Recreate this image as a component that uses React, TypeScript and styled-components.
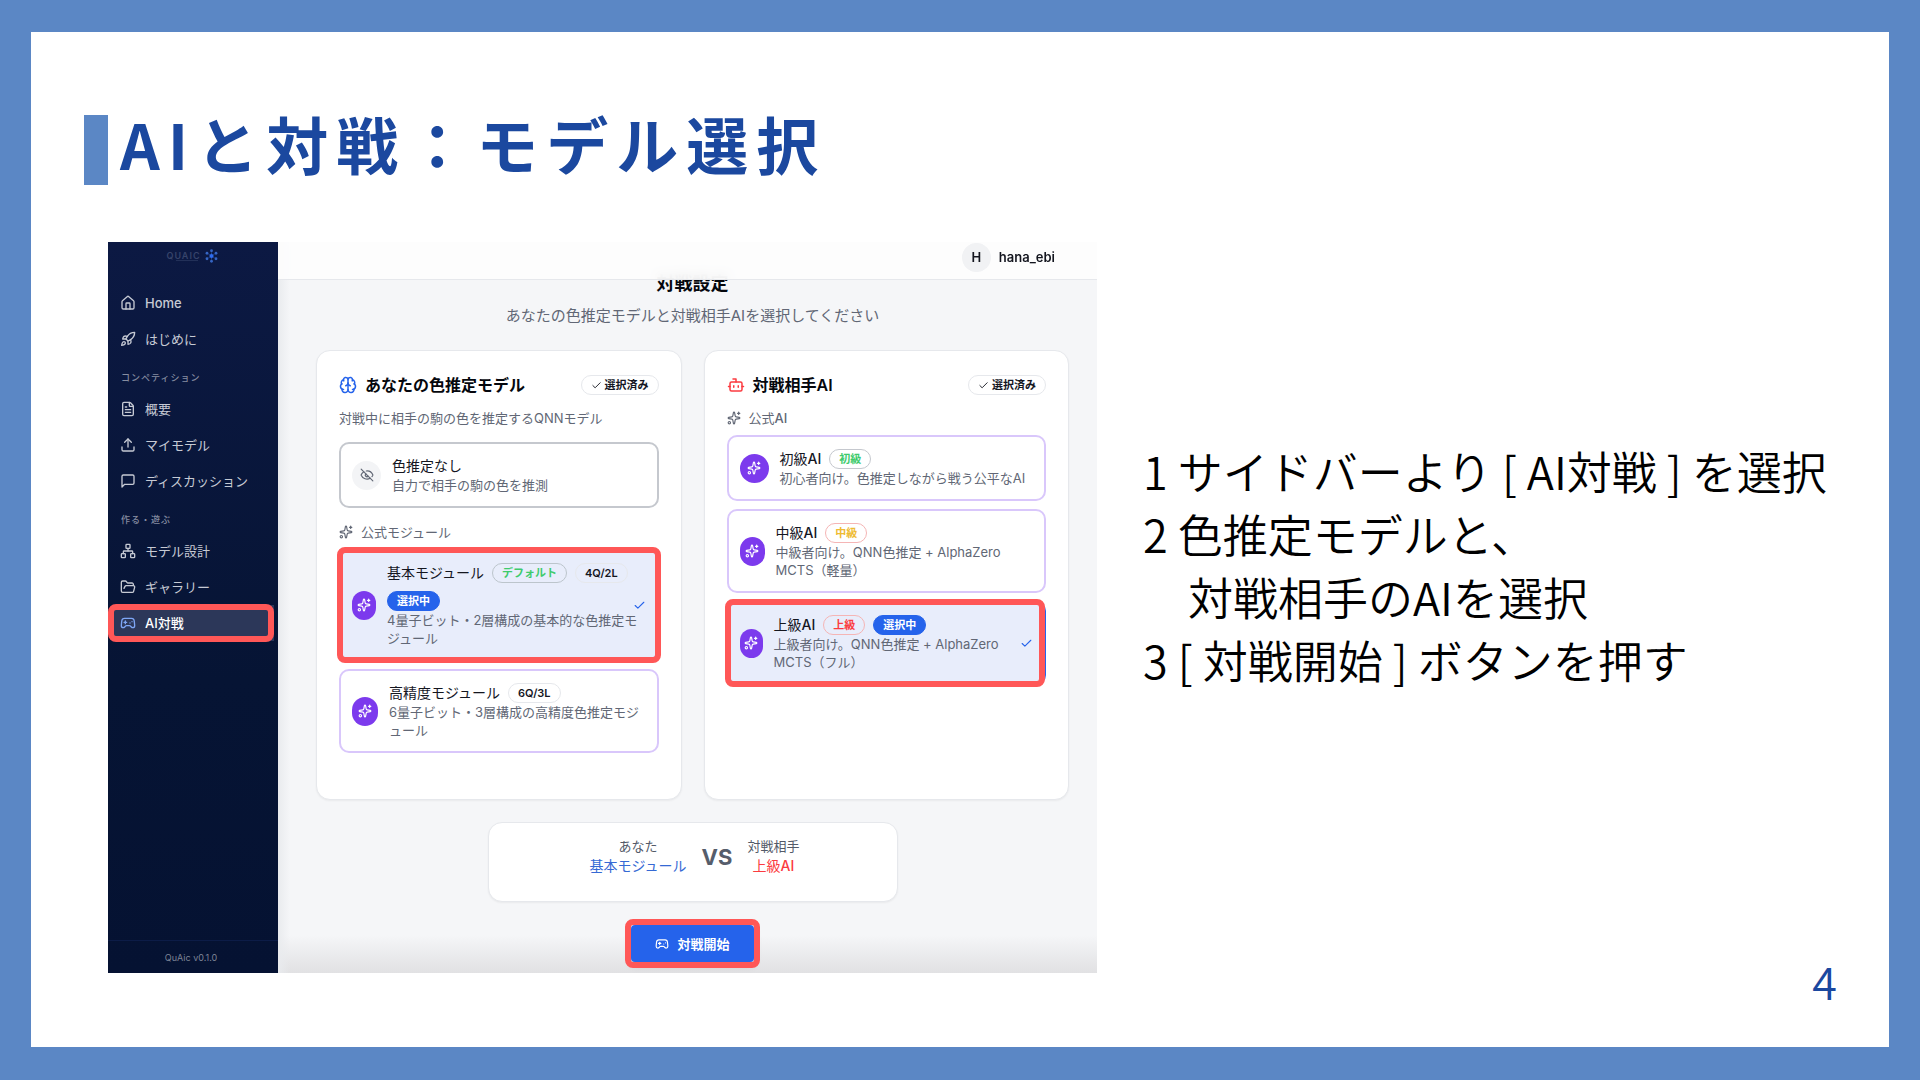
import React from "react";
import styled, { createGlobalStyle } from "styled-components";
import {
  Bot,
  Brain,
  Check,
  EyeOff,
  FileText,
  FolderOpen,
  Gamepad2,
  House,
  Network,
  Rocket,
  Sparkles,
  Upload,
} from "lucide-react";

const color = {
  frame: "#5b87c5",
  heading: "#1b489f",
  mark: "#ff5757",
  blue: "#2563eb",
  purple: "#7c3aed",
  red: "#fb3b40",
  green: "#3ecb6c",
  amber: "#eebb33",
  ink: "#14161f",
  muted: "#616775",
  line: "#e6e8ec",
};

const GlobalStyle = createGlobalStyle`
  * { box-sizing: border-box; }
  body { margin: 0; background: ${color.frame}; }
  button { font: inherit; color: inherit; }
  h1, h2, h3, p, ul, ol { margin: 0; padding: 0; }
  ul, ol { list-style: none; }
`;

const Slide = styled.main`
  min-height: 100vh;
  display: flex;
  flex-direction: column;
  padding: 83px 0 44px;
  border: solid ${color.frame};
  border-width: 32px 31px 33px;
  background: #fff;
  font-family: "Noto Sans CJK JP", sans-serif;
`;

const SlideTitle = styled.h1`
  display: flex;
  align-items: flex-start;
  gap: 12px;
  margin: 0 53px 57px;
  height: 70px;
  color: ${color.heading};
  font-size: 62px;
  font-weight: 700;
  line-height: 56px;
  letter-spacing: 8px;
  white-space: nowrap;

  &::before {
    content: "";
    width: 24px;
    height: 70px;
    background: ${color.frame};
  }
`;

const Columns = styled.div`
  flex: 1;
  display: grid;
  grid-template-columns: minmax(0, 989fr) minmax(0, 698fr);
  gap: 46px;
  padding: 0 48px 0 77px;
`;

const Notes = styled.section`
  display: flex;
  flex-direction: column;
  justify-content: space-between;
  padding-top: 197px;
`;

const Steps = styled.ol`
  color: #000;
  font-size: 45px;
  font-weight: 350;
  line-height: 63px;
  white-space: pre;
`;

const PageNumber = styled.p`
  padding-right: 4px;
  color: ${color.heading};
  font-size: 45px;
  font-weight: 350;
  line-height: 44px;
  text-align: right;
`;

const AppWindow = styled.section`
  display: grid;
  grid-template-columns: 170px minmax(0, 1fr);
  align-self: start;
  overflow: hidden;
  font-family: Inter, "Noto Sans CJK JP", sans-serif;
`;

const Sidebar = styled.aside`
  display: flex;
  flex-direction: column;
  background: linear-gradient(#0c1943, #061434 60%, #051232);
  color: #c6cad4;
`;

const Logo = styled.div`
  display: flex;
  justify-content: center;
  align-items: center;
  gap: 4px;
  height: 27px;
  margin-bottom: 16px;
  padding-right: 2px;
  color: #36436a;
  font-size: 9px;
  font-weight: 600;
  letter-spacing: 1px;
`;

const LogoName = styled.span`
  line-height: 11px;
  background: linear-gradient(#223058, #223058) 10px 100% / 22px 1px no-repeat;
`;

const Nav = styled.nav`
  flex: 1;
  padding: 0 4px 0 6px;
`;

const NavLabel = styled.h2`
  padding: 15px 7px 7px;
  color: #868da1;
  font-size: 9px;
  font-weight: 500;
  line-height: 12px;
  letter-spacing: 1px;
`;

const NavLink = styled.a<{ $active?: boolean }>`
  position: relative;
  display: flex;
  align-items: center;
  gap: 9px;
  height: 36px;
  padding: 0 6px;
  color: ${(p) => (p.$active ? "#fff" : "inherit")};
  background: ${(p) => (p.$active ? "#2c3759" : "none")};
  font-size: 13px;
  font-weight: ${(p) => (p.$active ? 500 : 400)};
  line-height: 16px;
  text-decoration: none;

  svg {
    color: ${(p) => (p.$active ? "#7ea6f5" : "inherit")};
  }
`;

const Latin = styled.span`
  font-weight: 500;
`;

const Mark = styled.span<{ $inset: string }>`
  position: absolute;
  inset: ${(p) => p.$inset};
  border: 6px solid ${color.mark};
  border-radius: 8px;
  pointer-events: none;
`;

const Version = styled.p`
  height: 33px;
  padding-right: 4px;
  border-top: 1px solid #0c1c47;
  color: #7d8496;
  font-size: 9px;
  line-height: 34px;
  text-align: center;
`;

const Workspace = styled.div`
  display: flex;
  flex-direction: column;
  background:
    linear-gradient(to right, #e9ebee, transparent 12px),
    linear-gradient(to top, #e1e1e3, transparent 38px),
    #f5f6f8;
`;

const TopBar = styled.header`
  position: relative;
  z-index: 1;
  display: flex;
  justify-content: flex-end;
  align-items: center;
  gap: 8px;
  height: 38px;
  padding: 0 42px 7px;
  border-bottom: 1px solid ${color.line};
  background: rgba(253, 253, 253, 0.92);
  backdrop-filter: blur(5px);
  color: ${color.ink};
  font-size: 13px;
  font-weight: 600;
`;

const Avatar = styled.span`
  width: 29px;
  height: 29px;
  border-radius: 50%;
  background: #f1f2f4;
  line-height: 29px;
  text-align: center;
`;

const Content = styled.div`
  display: flex;
  flex-direction: column;
  align-items: center;
  margin-top: -8px;
  padding: 0 28px 11px 38px;
`;

const PageTitle = styled.h2`
  color: #05070d;
  font-size: 18px;
  font-weight: 700;
  line-height: 24px;
`;

const Lead = styled.p`
  margin: 8px 0 22px;
  color: ${color.muted};
  font-size: 15px;
  line-height: 24px;
`;

const Cards = styled.div`
  align-self: stretch;
  display: grid;
  grid-template-columns: repeat(2, minmax(0, 1fr));
  gap: 22px;
`;

const Panel = styled.section`
  border: 1px solid ${color.line};
  border-radius: 14px;
  background: #fff;
  box-shadow: 0 1px 2px rgba(0, 0, 0, 0.05);
`;

const Card = styled(Panel)`
  padding: 24px 22px 46px;
`;

const CardHead = styled.div`
  display: flex;
  align-items: center;
  gap: 8px;
  height: 20px;
  margin-bottom: 14px;
`;

const CardTitle = styled.h3`
  flex: 1;
  color: #05070d;
  font-size: 16px;
  font-weight: 600;
  line-height: 20px;
`;

const Caption = styled.p`
  display: flex;
  align-items: center;
  gap: 8px;
  color: ${color.muted};
  font-size: 13px;
  line-height: 18px;
`;

const Options = styled.div`
  display: grid;
  grid-template-columns: minmax(0, 1fr);
  gap: 8px;
  margin-top: 8px;
`;

const Spaced = styled.div`
  margin: 15px 0;
`;

type Tone = "plain" | "purple" | "selected";

const optionBorder: Record<Tone, string> = {
  plain: "#c5c8ce",
  purple: "#d9c7fb",
  selected: color.blue,
};

const OptionButton = styled.button<{ $tone: Tone }>`
  position: relative;
  display: flex;
  align-items: center;
  gap: 11px;
  width: 100%;
  padding: 12px 11px;
  border: 2px solid ${(p) => optionBorder[p.$tone]};
  border-radius: 10px;
  background: ${(p) => (p.$tone === "selected" ? "#e8edfb" : "#fff")};
  text-align: left;
`;

const OptionIcon = styled.span<{ $width: number; $plain?: boolean }>`
  flex: none;
  display: flex;
  align-items: center;
  justify-content: center;
  width: ${(p) => p.$width}px;
  height: 29px;
  border-radius: 15px;
  color: ${(p) => (p.$plain ? color.muted : "#fff")};
  background: ${(p) => (p.$plain ? "#f3f4f6" : color.purple)};
`;

const OptionBody = styled.span`
  flex: 1;
  min-width: 0;
`;

const OptionHead = styled.span`
  display: flex;
  flex-wrap: wrap;
  align-items: center;
  gap: 8px;
  color: ${color.ink};
  font-size: 14px;
  line-height: 20px;
`;

const OptionText = styled.span`
  display: block;
  color: ${color.muted};
  font-size: 13px;
  line-height: 18px;
  white-space: pre;
`;

const OptionCheck = styled(Check)`
  flex: none;
  margin-left: -11px;
  color: ${color.blue};
`;

const Badge = styled.span<{ $ink?: string; $line?: string; $fill?: string }>`
  display: inline-flex;
  align-items: center;
  gap: 3px;
  height: 20px;
  padding: 0 9px;
  border: 1px solid ${(p) => p.$line ?? color.line};
  border-radius: 10px;
  color: ${(p) => p.$ink ?? color.ink};
  background: ${(p) => p.$fill ?? "none"};
  font-size: 11px;
  font-weight: 600;
  line-height: 18px;
  white-space: nowrap;
`;

const Versus = styled(Panel)`
  display: flex;
  justify-content: center;
  gap: 15px;
  width: 410px;
  margin: 22px 0 23px;
  padding: 14px 0 24px 4px;
`;

const Side = styled.div`
  color: #535a68;
  font-size: 13px;
  line-height: 18px;
  text-align: center;
`;

const SideName = styled.p<{ $ink: string }>`
  margin-top: 1px;
  color: ${(p) => p.$ink};
  font-size: 14px;
  line-height: 20px;
`;

const VsText = styled.span`
  color: #565d6b;
  font-size: 22px;
  font-weight: 700;
  line-height: 40px;
`;

const StartButton = styled.button`
  position: relative;
  display: flex;
  align-items: center;
  gap: 8px;
  height: 37px;
  padding: 0 24px;
  border: 0;
  border-radius: 4px;
  background: ${color.blue};
  color: #fff;
  font-size: 13px;
  font-weight: 600;
  box-shadow: 0 4px 8px rgba(0, 0, 0, 0.1);
`;

const ChatIcon = () => (
  <svg width="16" height="16" viewBox="0 0 24 24" fill="none" stroke="currentColor" strokeWidth="2" strokeLinecap="round" strokeLinejoin="round">
    <path d="M21 15a2 2 0 0 1-2 2H7l-4 4V5a2 2 0 0 1 2-2h14a2 2 0 0 1 2 2z" />
  </svg>
);

const LogoMark = () => (
  <svg width="13" height="14" viewBox="0 0 26 28" fill="#3565c4">
    <path d="M13 7v14M7 10.500l12 7M19 10.500l-12 7" stroke="#234690" strokeWidth="2" />
    <circle cx="13" cy="14" r="4" fill="#2f6df0" />
    <circle cx="13" cy="3.500" r="2.800" />
    <circle cx="13" cy="24.500" r="2.800" />
    <circle cx="4" cy="8.500" r="2.800" />
    <circle cx="22" cy="8.500" r="2.800" />
    <circle cx="4" cy="19.500" r="2.800" />
    <circle cx="22" cy="19.500" r="2.800" />
  </svg>
);

/* Latin runs are set one step heavier than the Japanese around them. */
const Mixed = ({ children }: { children: string }) => (
  <span>
    {children.split(/([A-Za-z]+)/).map((run, i) => (i % 2 ? <Latin key={i}>{run}</Latin> : run))}
  </span>
);

interface NavEntry {
  label: string;
  icon: React.ReactNode;
  active?: boolean;
}

const navGroups: { title?: string; items: NavEntry[] }[] = [
  {
    items: [
      { label: "Home", icon: <House size={16} /> },
      { label: "はじめに", icon: <Rocket size={16} /> },
    ],
  },
  {
    title: "コンペティション",
    items: [
      { label: "概要", icon: <FileText size={16} /> },
      { label: "マイモデル", icon: <Upload size={16} /> },
      { label: "ディスカッション", icon: <ChatIcon /> },
    ],
  },
  {
    title: "作る・遊ぶ",
    items: [
      { label: "モデル設計", icon: <Network size={16} /> },
      { label: "ギャラリー", icon: <FolderOpen size={16} /> },
      { label: "AI対戦", icon: <Gamepad2 size={16} />, active: true },
    ],
  },
];

interface OptionProps {
  name: string;
  text: string;
  tone?: Tone;
  iconWidth: number;
  badges?: React.ReactNode;
  markInset?: string;
}

const Option = ({ name, text, tone = "purple", iconWidth, badges, markInset }: OptionProps) => (
  <OptionButton type="button" $tone={tone} aria-pressed={tone === "selected"}>
    <OptionIcon $width={iconWidth} $plain={tone === "plain"}>
      {tone === "plain" ? <EyeOff size={14} /> : <Sparkles size={14} />}
    </OptionIcon>
    <OptionBody>
      <OptionHead>
        <Mixed>{name}</Mixed>
        {badges}
        {tone === "selected" && (
          <Badge $ink="#fff" $fill={color.blue} $line={color.blue}>選択中</Badge>
        )}
      </OptionHead>
      <OptionText>{text}</OptionText>
    </OptionBody>
    {tone === "selected" && <OptionCheck size={13} />}
    {markInset && <Mark $inset={markInset} />}
  </OptionButton>
);

const ChosenBadge = () => (
  <Badge>
    <Check size={11} />
    選択済み
  </Badge>
);

export default function App() {
  return (
    <>
      <GlobalStyle />
      <Slide>
        <SlideTitle>AIと対戦：モデル選択</SlideTitle>
        <Columns>
          <AppWindow>
            <Sidebar>
              <Logo>
                <LogoName>QUAIC</LogoName>
                <LogoMark />
              </Logo>
              <Nav>
                {navGroups.map((group, i) => (
                  <div key={i}>
                    {group.title && <NavLabel>{group.title}</NavLabel>}
                    {group.items.map((item) => (
                      <NavLink key={item.label} href="#" $active={item.active}>
                        {item.icon}
                        <Mixed>{item.label}</Mixed>
                        {item.active && <Mark $inset="-1px 0 -1px -6px" />}
                      </NavLink>
                    ))}
                  </div>
                ))}
              </Nav>
              <Version>QuAic v0.1.0</Version>
            </Sidebar>
            <Workspace>
              <TopBar>
                <Avatar>H</Avatar>
                hana_ebi
              </TopBar>
              <Content>
                <PageTitle>対戦設定</PageTitle>
                <Lead>あなたの色推定モデルと対戦相手AIを選択してください</Lead>
                <Cards>
                  <Card>
                    <CardHead>
                      <Brain size={18} color={color.blue} />
                      <CardTitle>あなたの色推定モデル</CardTitle>
                      <ChosenBadge />
                    </CardHead>
                    <Caption>対戦中に相手の駒の色を推定するQNNモデル</Caption>
                    <Spaced>
                      <Option tone="plain" iconWidth={29} name="色推定なし" text="自力で相手の駒の色を推測" />
                    </Spaced>
                    <Caption>
                      <Sparkles size={14} />
                      公式モジュール
                    </Caption>
                    <Options>
                      <Option
                        tone="selected"
                        iconWidth={24}
                        name="基本モジュール"
                        text={"4量子ビット・2層構成の基本的な色推定モ\nジュール"}
                        markInset="-4px"
                        badges={
                          <>
                            <Badge $ink={color.green} $line="#bcc5cc">デフォルト</Badge>
                            <Badge>4Q/2L</Badge>
                          </>
                        }
                      />
                      <Option
                        iconWidth={26}
                        name="高精度モジュール"
                        text={"6量子ビット・3層構成の高精度色推定モジ\nュール"}
                        badges={<Badge>6Q/3L</Badge>}
                      />
                    </Options>
                  </Card>
                  <Card>
                    <CardHead>
                      <Bot size={18} color={color.red} />
                      <CardTitle>対戦相手AI</CardTitle>
                      <ChosenBadge />
                    </CardHead>
                    <Caption>
                      <Sparkles size={14} />
                      <Mixed>公式AI</Mixed>
                    </Caption>
                    <Options>
                      <Option
                        iconWidth={29}
                        name="初級AI"
                        text="初心者向け。色推定しながら戦う公平なAI"
                        badges={<Badge $ink={color.green} $line="#c5c8ce">初級</Badge>}
                      />
                      <Option
                        iconWidth={25}
                        name="中級AI"
                        text={"中級者向け。QNN色推定 + AlphaZero\nMCTS（軽量）"}
                        badges={<Badge $ink={color.amber} $line="#f5b5b5">中級</Badge>}
                      />
                      <Option
                        tone="selected"
                        iconWidth={23}
                        name="上級AI"
                        text={"上級者向け。QNN色推定 + AlphaZero\nMCTS（フル）"}
                        markInset="-4px -1px -4px -4px"
                        badges={<Badge $ink={color.red} $line="#f5b5b5">上級</Badge>}
                      />
                    </Options>
                  </Card>
                </Cards>
                <Versus>
                  <Side>
                    あなた
                    <SideName $ink="#3569d4">基本モジュール</SideName>
                  </Side>
                  <VsText>VS</VsText>
                  <Side>
                    対戦相手
                    <SideName $ink={color.red}>
                      <Mixed>上級AI</Mixed>
                    </SideName>
                  </Side>
                </Versus>
                <StartButton type="button">
                  <Gamepad2 size={14} />
                  対戦開始
                  <Mark $inset="-6px" />
                </StartButton>
              </Content>
            </Workspace>
          </AppWindow>
          <Notes>
            <Steps>
              <li>1 サイドバーより [ AI対戦 ] を選択</li>
              <li>{"2 色推定モデルと、\n　対戦相手のAIを選択"}</li>
              <li>3 [ 対戦開始 ] ボタンを押す</li>
            </Steps>
            <PageNumber>4</PageNumber>
          </Notes>
        </Columns>
      </Slide>
    </>
  );
}
